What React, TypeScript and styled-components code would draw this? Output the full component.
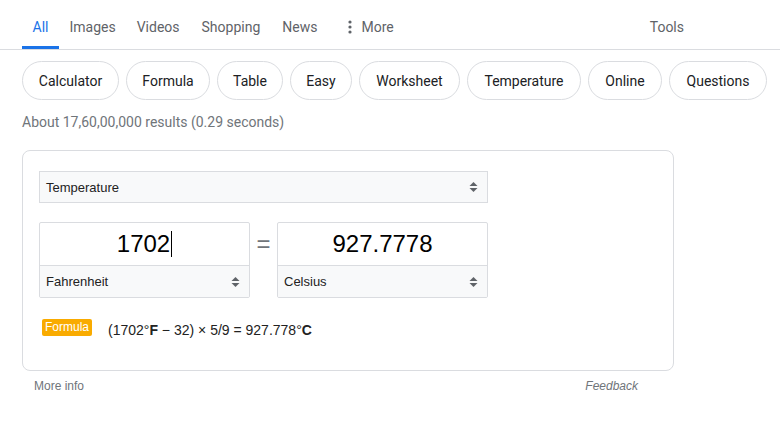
import styled, { createGlobalStyle } from "styled-components"

const GlobalStyle = createGlobalStyle`
  body {
    margin: 0;
    background: #ffffff;
    font-family: Roboto, "Liberation Sans", Arial, sans-serif;
  }
`

const tabs = ["All", "Images", "Videos", "Shopping", "News"]

const chips: { label: string; width: number }[] = [
  { label: "Calculator", width: 97 },
  { label: "Formula", width: 84 },
  { label: "Table", width: 66 },
  { label: "Easy", width: 62 },
  { label: "Worksheet", width: 101 },
  { label: "Temperature", width: 114 },
  { label: "Online", width: 74 },
  { label: "Questions", width: 98 }
]

const SortArrows = () => (
  <svg width="9" height="12" viewBox="0 0 9 12">
    <path d="M4.5 1 L8.5 5 L0.5 5 Z" fill="#5f6368" />
    <path d="M4.5 11 L8.5 7 L0.5 7 Z" fill="#5f6368" />
  </svg>
)

const MoreDots = () => (
  <svg width="4" height="14" viewBox="0 0 4 14">
    <circle cx="2" cy="2" r="1.6" fill="#5f6368" />
    <circle cx="2" cy="7" r="1.6" fill="#5f6368" />
    <circle cx="2" cy="12" r="1.6" fill="#5f6368" />
  </svg>
)

const UnitPicker = ({ label, flat }: { label: string; flat?: boolean }) => (
  <Picker flat={flat}>
    <span>{label}</span>
    <SortArrows />
  </Picker>
)

export default function App() {
  return (
    <>
      <GlobalStyle />
      <NavBar>
        {tabs.map((t) => (
          <Tab key={t} active={t === "All"} wide={t === "Shopping" || t === "News"}>
            {t}
          </Tab>
        ))}
        <MoreTab>
          <MoreDots />
          <span>More</span>
        </MoreTab>
        <ToolsTab>Tools</ToolsTab>
      </NavBar>
      <Content>
        <ChipRow>
          {chips.map((c) => (
            <Chip key={c.label} w={c.width}>
              {c.label}
            </Chip>
          ))}
        </ChipRow>
        <ResultStats>About 17,60,00,000 results (0.29 seconds)</ResultStats>
        <Card>
          <UnitPicker label="Temperature" />
          <ConverterRow>
            <ValueBox>
              <ValueInput>
                1702
                <Caret />
              </ValueInput>
              <UnitPicker label="Fahrenheit" flat />
            </ValueBox>
            <Equals>=</Equals>
            <ValueBox>
              <ValueInput>927.7778</ValueInput>
              <UnitPicker label="Celsius" flat />
            </ValueBox>
          </ConverterRow>
          <FormulaRow>
            <FormulaBadge>Formula</FormulaBadge>
            <FormulaText>
              (1702°<b>F</b> − 32) × 5/9 = 927.778°<b>C</b>
            </FormulaText>
          </FormulaRow>
        </Card>
        <CardFooter>
          <span>More info</span>
          <Feedback>Feedback</Feedback>
        </CardFooter>
      </Content>
    </>
  )
}

const NavBar = styled.div`
  display: flex;
  height: 49px;
  padding-left: 22px;
  padding-right: 96px;
  border-bottom: 1px solid #dadce0;
`

const Tab = styled.div<{ active?: boolean; wide?: boolean }>`
  box-sizing: border-box;
  display: flex;
  align-items: center;
  height: 49px;
  padding: 8px 10.5px 0;
  margin-left: ${(p) => (p.wide ? "1px" : "0")};
  font-size: 14px;
  color: ${(p) => (p.active ? "#1a73e8" : "#5f6368")};
  border-bottom: 3px solid ${(p) => (p.active ? "#1a73e8" : "transparent")};
`

const MoreTab = styled(Tab)`
  gap: 9px;
  margin-left: 10px;
`

const ToolsTab = styled(Tab)`
  margin-left: auto;
  padding: 8px 0 0;
`

const Content = styled.div`
  padding-left: 22px;
`

const ChipRow = styled.div`
  display: flex;
  gap: 7px;
  margin-top: 11px;
`

const Chip = styled.div<{ w: number }>`
  box-sizing: border-box;
  flex: none;
  width: ${(p) => p.w}px;
  height: 39px;
  display: flex;
  align-items: center;
  justify-content: center;
  border: 1px solid #dadce0;
  border-radius: 20px;
  font-size: 14px;
  color: #202124;
`

const ResultStats = styled.div`
  margin-top: 12px;
  line-height: 20px;
  font-size: 14px;
  color: #70757a;
`

const Card = styled.div`
  box-sizing: border-box;
  width: 652px;
  height: 221px;
  margin-top: 18px;
  padding: 20px 16px 0;
  border: 1px solid #dadce0;
  border-radius: 8px;
  font-family: "Liberation Sans", Arial, sans-serif;
`

const Picker = styled.div<{ flat?: boolean }>`
  box-sizing: border-box;
  width: ${(p) => (p.flat ? "100%" : "449px")};
  height: 32px;
  display: flex;
  align-items: center;
  justify-content: space-between;
  padding: 0 9px 0 6px;
  background: #f8f9fa;
  border: ${(p) => (p.flat ? "none" : "1px solid #dadce0")};
  border-top: 1px solid #dadce0;
  font-size: 13px;
  color: #222222;
`

const ConverterRow = styled.div`
  display: flex;
  align-items: flex-start;
  margin-top: 19px;
  width: 449px;
`

const ValueBox = styled.div`
  box-sizing: border-box;
  width: 211px;
  height: 76px;
  display: flex;
  flex-direction: column;
  border: 1px solid #dadce0;
  border-radius: 2px;
  overflow: hidden;
`

const ValueInput = styled.div`
  height: 43px;
  display: flex;
  align-items: center;
  justify-content: center;
  font-size: 24px;
  color: #000000;
`

const Caret = styled.span`
  width: 1px;
  height: 26px;
  background: #000000;
  margin-left: 1px;
`

const Equals = styled.div`
  width: 27px;
  height: 44px;
  display: flex;
  align-items: center;
  justify-content: center;
  font-size: 24px;
  color: #70757a;
`

const FormulaRow = styled.div`
  display: flex;
  align-items: center;
  gap: 16px;
  margin-top: 24px;
  padding-left: 3px;
`

const FormulaBadge = styled.span`
  height: 17px;
  padding: 0 3px;
  display: flex;
  align-items: center;
  margin-top: -6px;
  background: #f9ab00;
  border-radius: 2px;
  color: #ffffff;
  font-size: 12px;
`

const FormulaText = styled.span`
  font-size: 14px;
  color: #222222;

  b {
    font-weight: 700;
  }
`

const CardFooter = styled.div`
  box-sizing: border-box;
  width: 652px;
  display: flex;
  justify-content: space-between;
  padding: 8px 36px 0 12px;
  font-family: "Liberation Sans", Arial, sans-serif;
  font-size: 12px;
  color: #70757a;
`

const Feedback = styled.span`
  font-style: italic;
`
